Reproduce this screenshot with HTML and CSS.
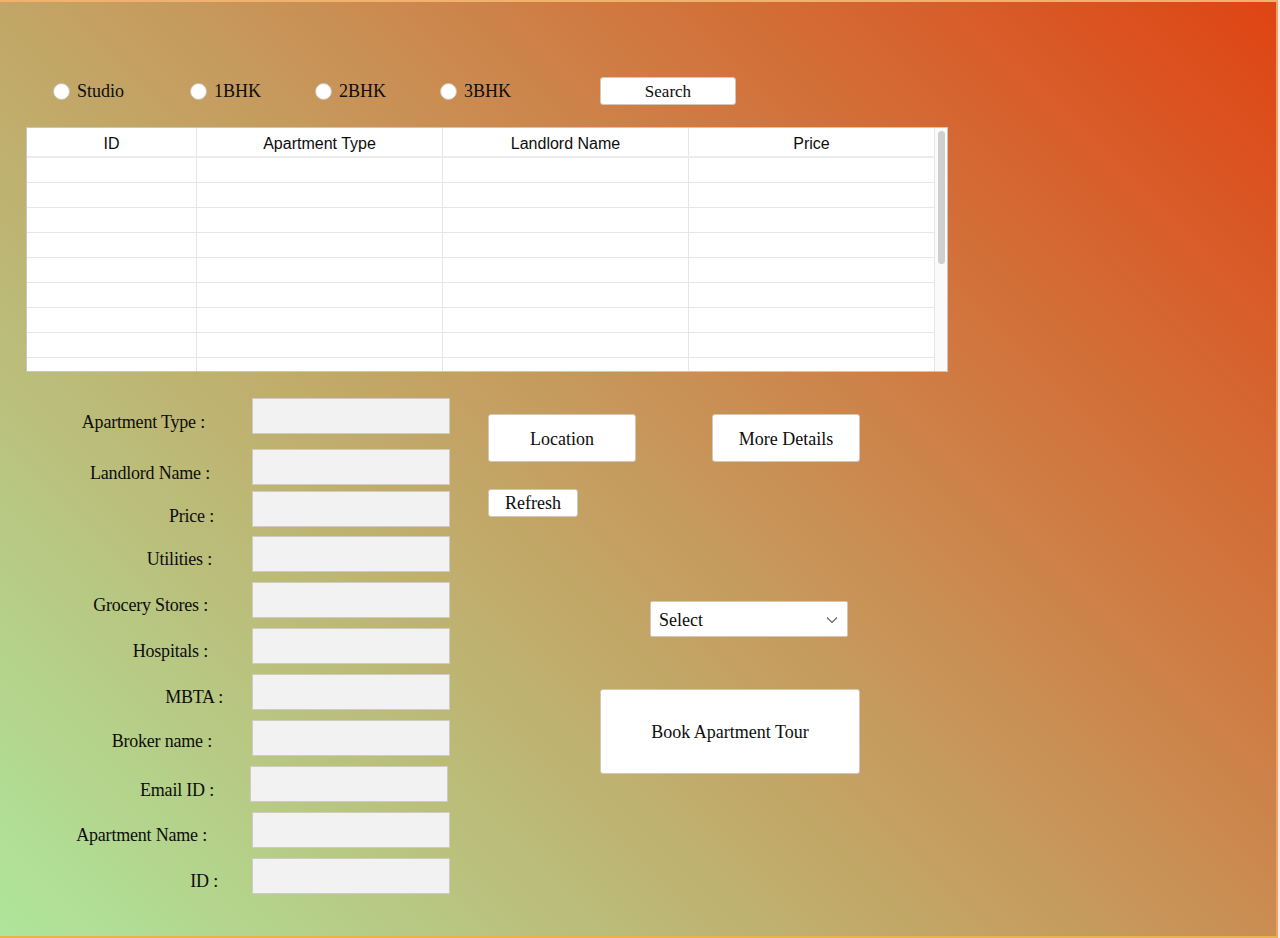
FILE: index.html
```html
<!DOCTYPE html>
<html lang="en">
<head>
<meta charset="utf-8">
<title>Apartment Search</title>
<link rel="stylesheet" href="styles.css">
</head>
<body>
<div class="app">
  <div class="top-row">
    <label class="radio-item"><input type="radio" name="type"><span>Studio</span></label>
    <label class="radio-item"><input type="radio" name="type"><span>1BHK</span></label>
    <label class="radio-item"><input type="radio" name="type"><span>2BHK</span></label>
    <label class="radio-item"><input type="radio" name="type"><span>3BHK</span></label>
    <button class="btn btn-search">Search</button>
  </div>

  <div class="table">
    <div class="table-body">
      <div class="tr th"><div>ID</div><div>Apartment Type</div><div>Landlord Name</div><div>Price</div></div>
      <div class="tr"><div></div><div></div><div></div><div></div></div>
      <div class="tr"><div></div><div></div><div></div><div></div></div>
      <div class="tr"><div></div><div></div><div></div><div></div></div>
      <div class="tr"><div></div><div></div><div></div><div></div></div>
      <div class="tr"><div></div><div></div><div></div><div></div></div>
      <div class="tr"><div></div><div></div><div></div><div></div></div>
      <div class="tr"><div></div><div></div><div></div><div></div></div>
      <div class="tr"><div></div><div></div><div></div><div></div></div>
      <div class="tr"><div></div><div></div><div></div><div></div></div>
    </div>
    <div class="scrollbar"><div class="thumb"></div></div>
  </div>

  <div class="lower">
    <div class="form">
      <div class="field f1"><label class="l-apttype">Apartment Type :</label><input type="text"></div>
      <div class="field f2"><label class="l-landlord">Landlord Name :</label><input type="text"></div>
      <div class="field f3"><label class="l-price">Price :</label><input type="text"></div>
      <div class="field f4"><label>Utilities :</label><input type="text"></div>
      <div class="field"><label class="l-grocery">Grocery Stores :</label><input type="text"></div>
      <div class="field"><label class="l-grocery">Hospitals :</label><input type="text"></div>
      <div class="field"><label class="l-mbta">MBTA :</label><input type="text"></div>
      <div class="field"><label class="l-broker">Broker name :</label><input type="text"></div>
      <div class="field f-email"><label class="l-email">Email ID :</label><input type="text"></div>
      <div class="field"><label class="l-aptname">Apartment Name :</label><input type="text"></div>
      <div class="field"><label class="l-id">ID :</label><input type="text"></div>
    </div>

    <div class="actions">
      <div class="btn-row">
        <button class="btn btn-big">Location</button>
        <button class="btn btn-big">More Details</button>
      </div>
      <button class="btn btn-refresh">Refresh</button>
      <div class="select">
        <span>Select</span>
        <svg width="12" height="8" viewBox="0 0 12 8"><path d="M1 1.5 L6 6.5 L11 1.5" fill="none" stroke="#666" stroke-width="1.2"/></svg>
      </div>
      <button class="btn btn-book">Book Apartment Tour</button>
    </div>
  </div>
</div>
</body>
</html>
```

FILE: styles.css
```css
* { box-sizing: border-box; }

html, body {
  margin: 0;
  padding: 0;
  background: #ece9f3;
}

.app {
  width: 1278px;
  height: 938px;
  border-top: 2px solid #f0b26c;
  border-right: 2px solid #eea25f;
  border-bottom: 2px solid #e9b24a;
  background: linear-gradient(45deg, #aee69b 0%, #c69a5d 50%, #df4414 100%);
  font-family: "Liberation Serif", "Times New Roman", serif;
  color: #0d0d0d;
  overflow: hidden;
}

/* top radio row */
.top-row {
  display: grid;
  grid-template-columns: 137px 125px 125px 160px 136px;
  align-items: center;
  margin: 75px 0 0 53px;
  height: 28px;
}

.radio-item {
  display: flex;
  align-items: center;
  gap: 7px;
  font-size: 18px;
}

.radio-item input {
  appearance: none;
  -webkit-appearance: none;
  margin: 0;
  width: 17px;
  height: 17px;
  border-radius: 50%;
  background: #fff;
  border: 1px solid #c9c2b5;
}

.btn {
  font-family: "Liberation Serif", "Times New Roman", serif;
  color: #0d0d0d;
  background: #fff;
  border: 1px solid #d2c7b8;
  border-radius: 3px;
  padding: 0;
  font-size: 18px;
}

.btn-search {
  width: 136px;
  height: 28px;
  font-size: 17px;
  padding-top: 1px;
}

/* table */
.table {
  display: flex;
  width: 922px;
  height: 245px;
  margin: 22px 0 0 26px;
  background: #fff;
  border: 1px solid #c9c5c0;
  overflow: hidden;
}

.table-body {
  width: 908px;
}

.tr {
  display: grid;
  grid-template-columns: 170px 246px 246px 246px;
  height: 25px;
  border-bottom: 1px solid #e6e6e6;
}

.tr > div {
  border-right: 1px solid #e6e6e6;
}

.th {
  height: 30px;
  font-family: "Liberation Sans", Arial, sans-serif;
  font-size: 16px;
  border-bottom: 2px solid #ececec;
}

.th > div {
  display: flex;
  align-items: center;
  justify-content: center;
  padding-top: 3px;
}

.scrollbar {
  width: 13px;
  padding: 3px 3px 0 3px;
  background: #fafafa;
}

.thumb {
  width: 7px;
  height: 133px;
  border-radius: 4px;
  background: #cfcfcf;
}

/* lower section */
.lower {
  display: flex;
  margin-top: 26px;
}

.form {
  width: 450px;
  display: flex;
  flex-direction: column;
  gap: 10px;
}

.field {
  display: grid;
  grid-template-columns: 212px 198px;
  column-gap: 40px;
  height: 36px;
}

.field.f2 { margin-top: 5px; }
.field.f3 { margin-top: -4px; }
.field.f4 { margin-top: -1px; }

.field label {
  text-align: right;
  font-size: 18px;
  line-height: 36px;
  padding-top: 5px;
  white-space: nowrap;
  letter-spacing: -0.2px;
}

.field label.l-apttype { padding-right: 7px; padding-top: 6px; }
.field label.l-landlord { padding-right: 2px; padding-top: 6px; }
.field label.l-price { margin-right: -2px; padding-top: 7px; }
.field label.l-email { margin-right: -2px; padding-top: 6px; }
.field label.l-grocery { padding-right: 4px; }
.field label.l-mbta { margin-right: -11px; }
.field label.l-broker { padding-top: 3px; }
.field label.l-aptname { padding-right: 5px; }
.field label.l-id { margin-right: -6px; }

.field input {
  width: 198px;
  height: 36px;
  margin: 0;
  background: #f2f2f2;
  border: 1px solid #cfcac3;
  border-radius: 0;
  font-family: inherit;
  font-size: 16px;
}

.field.f-email input { margin-left: -2px; }

/* right-side actions */
.actions {
  display: flex;
  flex-direction: column;
  align-items: flex-start;
  margin-left: 38px;
  padding-top: 16px;
}

.btn-row {
  display: flex;
  gap: 76px;
}

.btn-big {
  width: 148px;
  height: 48px;
  padding-top: 2px;
}

.btn-refresh {
  width: 90px;
  height: 28px;
  margin-top: 27px;
  padding-top: 1px;
}

.select {
  display: flex;
  align-items: center;
  justify-content: space-between;
  width: 198px;
  height: 36px;
  margin: 84px 0 0 162px;
  padding: 2px 9px 0 8px;
  background: #fff;
  border: 1px solid #d2c7b8;
  border-radius: 2px;
  font-size: 18px;
}

.btn-book {
  width: 260px;
  height: 85px;
  margin: 52px 0 0 112px;
  padding-top: 2px;
}
```
